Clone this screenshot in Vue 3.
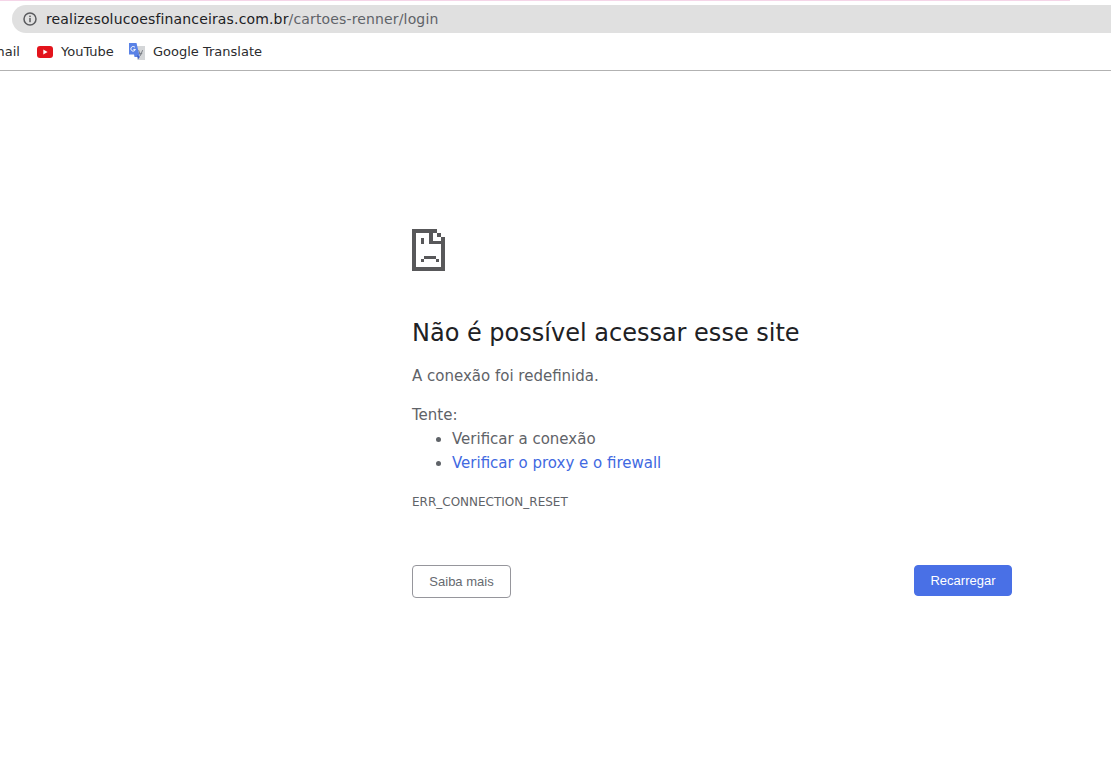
<script setup>
const bookmarks = ['YouTube', 'Google Translate']
</script>

<template>
  <div class="page">
    <header class="chrome">
      <div class="progress"></div>
      <div class="omnibox">
        <svg class="info" width="16" height="16" viewBox="0 0 16 16">
          <circle cx="8" cy="8" r="6" fill="none" stroke="#5a5b5e" stroke-width="1.5" />
          <rect x="7.25" y="7" width="1.5" height="4.2" fill="#5a5b5e" />
          <rect x="7.25" y="4.6" width="1.5" height="1.5" fill="#5a5b5e" />
        </svg>
        <span class="url"><span class="host">realizesolucoesfinanceiras.com.br</span><span class="path">/cartoes-renner/login</span></span>
      </div>
      <nav class="bookmarks">
        <span class="mark cut">Gmail</span>
        <span class="mark yt">
          <svg width="16" height="16" viewBox="0 0 16 16">
            <rect x="0" y="2" width="16" height="12" rx="3" fill="#e3141c" />
            <path d="M6.3 5.6 10.6 8 6.3 10.4Z" fill="#fff" />
          </svg>
          {{ bookmarks[0] }}
        </span>
        <span class="mark gt">
          <svg width="18" height="18" viewBox="0 0 18 18">
            <path d="M8 3H17V17H9.5Z" fill="#d4d6d8" />
            <path d="M10.6 7.2 12.5 12.5 14.6 7.2M10.9 10.4H14.2" fill="none" stroke="#7c8087" stroke-width="1" />
            <path d="M1 0H8.5L11.8 14H6.5L6 11.5H1Z" fill="#5a82e6" />
            <path d="M9 12 11.8 14 10 16.5Z" fill="#3e5fc4" />
            <path d="M7 4.4A2.3 2.3 0 1 0 7.4 6.4H5.4" fill="none" stroke="#fff" stroke-width="1" />
          </svg>
          {{ bookmarks[1] }}
        </span>
      </nav>
    </header>

    <main class="content">
      <div class="error">
        <svg class="sad" width="33" height="42" viewBox="0 0 33 42" shape-rendering="crispEdges">
          <path fill-rule="evenodd" d="M0 0H25V4H29V8H33V42H0ZM4 4V38H29V15H17V4Z" fill="#58585a" />
          <rect x="9" y="9" width="3" height="6" fill="#58585a" />
          <rect x="12" y="27" width="12" height="3" fill="#58585a" />
          <rect x="9" y="30" width="3" height="3" fill="#58585a" />
          <rect x="24" y="30" width="3" height="3" fill="#58585a" />
          <path d="M21 4H25V8H29V12H21Z" fill="#fff" />
        </svg>

        <h1>Não é possível acessar esse site</h1>
        <p class="sub">A conexão foi redefinida.</p>
        <p class="try">Tente:</p>
        <ul>
          <li>Verificar a conexão</li>
          <li><a>Verificar o proxy e o firewall</a></li>
        </ul>
        <div class="code">ERR_CONNECTION_RESET</div>

        <div class="actions">
          <button class="secondary">Saiba mais</button>
          <button class="primary">Recarregar</button>
        </div>
      </div>
    </main>
  </div>
</template>

<style>
html, body { margin: 0; background: #fff; }
</style>

<style scoped>
.page {
  width: 1111px;
  height: 759px;
  overflow: hidden;
  background: #fff;
  font-family: "DejaVu Sans", sans-serif;
}
.chrome {
  height: 70px;
  border-bottom: 1px solid #b2b2b2;
  position: relative;
  overflow: hidden;
}
.progress {
  position: absolute;
  left: 0;
  top: 0;
  width: 1070px;
  height: 1px;
  background: #f5d5e8;
}
.omnibox {
  position: absolute;
  left: 12px;
  right: -30px;
  top: 5px;
  height: 28px;
  border-radius: 14px;
  background: #e0e0e0;
  display: flex;
  align-items: center;
  padding-left: 10px;
}
.info { flex: none; }
.url {
  margin-left: 8px;
  font-size: 14px;
  letter-spacing: 0.15px;
  white-space: nowrap;
}
.host { color: #202124; }
.path { color: #5f6368; }
.bookmarks {
  position: absolute;
  top: 33px;
  left: 0;
  height: 37px;
  display: flex;
  align-items: center;
  font-size: 13px;
  color: #2b2c2e;
  white-space: nowrap;
}
.mark { display: flex; align-items: center; gap: 8px; }
.mark svg { flex: none; }
.cut { margin-left: -18px; width: 39px; }
.yt { margin-left: 16px; width: 76px; }
.gt { margin-left: 15px; gap: 7px; }
.content {
  display: flex;
  padding: 158px 0 0 412px;
}
.error { width: 600px; }
.sad { display: block; }
h1 {
  margin: 47px 0 0;
  font-size: 24px;
  font-weight: 400;
  line-height: 30px;
  color: #202124;
}
.sub, .try, li, .code { color: #5f6368; }
.sub {
  margin: 16px 0 0;
  font-size: 15px;
  line-height: 24px;
}
.try {
  margin: 15px 0 0;
  font-size: 15px;
  line-height: 24px;
}
ul {
  margin: 0;
  padding-left: 40px;
  font-size: 15px;
  line-height: 24px;
}
a { color: #4169e1; }
.code {
  margin-top: 15px;
  font-size: 12px;
  line-height: 24px;
}
.actions {
  margin-top: 51px;
  display: flex;
  justify-content: space-between;
  align-items: flex-start;
}
button {
  font-family: "Liberation Sans", sans-serif;
  font-size: 13px;
  border-radius: 4px;
  padding: 0;
  height: 31px;
  box-sizing: border-box;
}
.secondary {
  width: 99px;
  height: 33px;
  background: #fff;
  border: 1px solid #96969c;
  color: #666a70;
}
.primary {
  width: 98px;
  background: #4970e6;
  border: 1px solid #4970e6;
  color: #fff;
}
</style>
